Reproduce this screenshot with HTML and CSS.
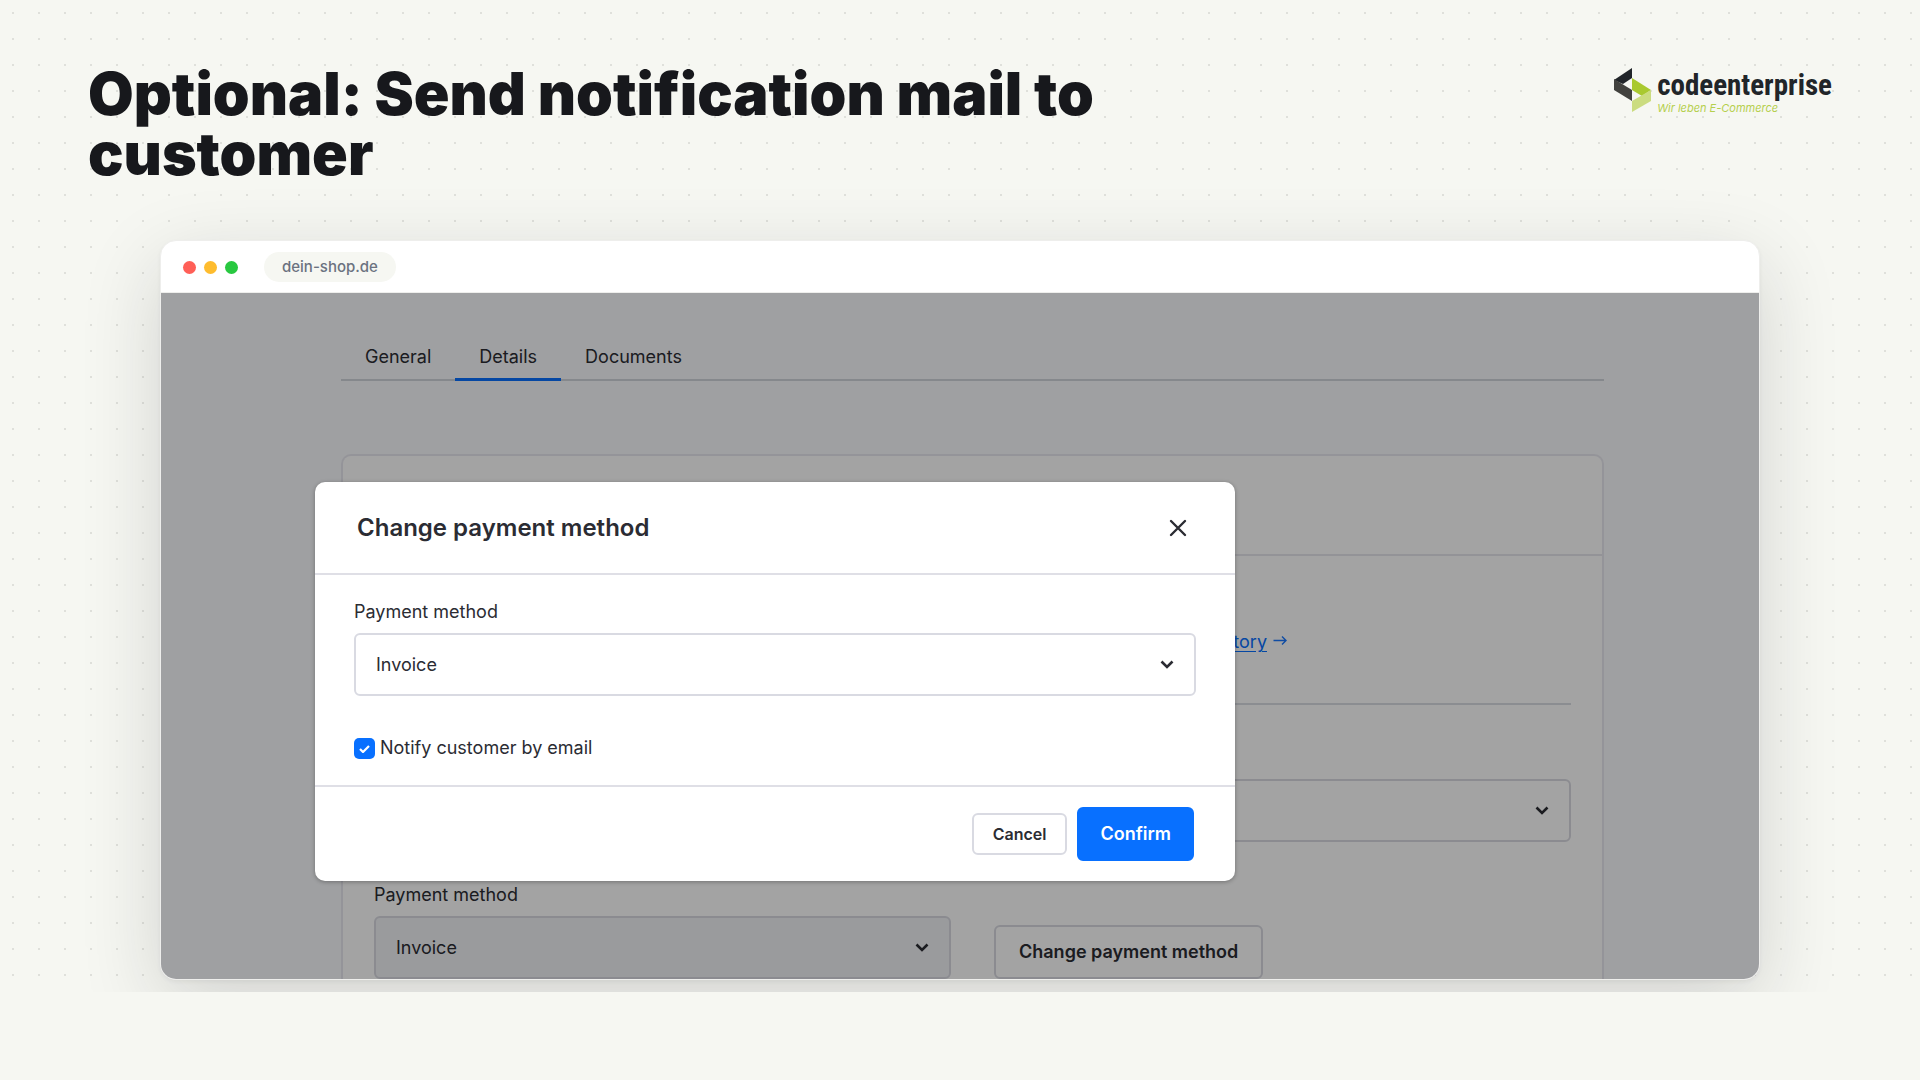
FILE: index.html
```html
<!DOCTYPE html>
<html lang="en">

<head>
    <meta charset="UTF-8">
    <meta name="viewport" content="width=device-width, initial-scale=1.0">
    <title>Optional: Send notification mail to customer</title>
    <link rel="stylesheet" href="styles.css">
</head>

<body>
    <section class="slide">
        <header class="slide-header">
            <h1 class="title">Optional: Send notification mail to customer</h1>

            <div class="logo">
                <svg class="logo-mark" width="38" height="46" viewBox="0 0 38 46">
                    <path d="M18 0 L0 12 L9 16 L18 10 Z" fill="#212529" />
                    <path d="M0 11 L18 22 V33 L0 22 Z" fill="#42423e" />
                    <path d="M18 10 L37 22 L28 28 L18 22 Z" fill="#a9c92f" />
                    <path d="M37 22 V33 L18 44 V33 Z" fill="#cbdc80" />
                </svg>
                <div class="logo-text">
                    <span class="logo-name">codeenterprise</span>
                    <span class="logo-claim">Wir leben E-Commerce</span>
                </div>
            </div>
        </header>

        <div class="browser">
            <div class="browser-bar">
                <span class="dot dot-red"></span>
                <span class="dot dot-yellow"></span>
                <span class="dot dot-green"></span>
                <span class="address">dein-shop.de</span>
            </div>

            <div class="screen">
                <nav class="tabs">
                    <a class="tab" href="#general">General</a>
                    <a class="tab active" href="#details">Details</a>
                    <a class="tab" href="#documents">Documents</a>
                </nav>

                <div class="card">
                    <div class="card-header"></div>
                    <div class="card-body">
                        <div class="history">
                            <a class="history-link" href="#history">history</a>
                            <svg width="14" height="12" viewBox="0 0 14 12" fill="none" stroke="currentColor" stroke-width="1.4">
                                <path d="M0.5 5.5 H13 M9 1.5 L13 5.5 L9 9.5" />
                            </svg>
                        </div>

                        <div class="fields">
                            <div class="select-box column-right">
                                <select class="select" aria-label="Status">
                                    <option></option>
                                </select>
                                <svg class="chevron" width="14" height="9" viewBox="0 0 14 9">
                                    <path d="M1.5 1.5 L7 7 L12.5 1.5" />
                                </svg>
                            </div>

                            <div class="field">
                                <label class="label" for="currentMethod">Payment method</label>
                                <div class="select-box">
                                    <select class="select disabled" id="currentMethod">
                                        <option>Invoice</option>
                                    </select>
                                    <svg class="chevron" width="14" height="9" viewBox="0 0 14 9">
                                        <path d="M1.5 1.5 L7 7 L12.5 1.5" />
                                    </svg>
                                </div>
                            </div>
                            <button type="button" class="button change-button">Change payment method</button>
                        </div>
                    </div>
                </div>

                <div class="overlay">
                    <div class="modal" role="dialog" aria-labelledby="modalTitle">
                        <div class="modal-header">
                            <h2 class="modal-title" id="modalTitle">Change payment method</h2>
                            <button type="button" class="close" aria-label="Close">
                                <svg width="18" height="18" viewBox="0 0 18 18" fill="none" stroke="#2b2c33" stroke-width="2.4" stroke-linecap="round">
                                    <path d="M2 2 L16 16 M16 2 L2 16" />
                                </svg>
                            </button>
                        </div>

                        <div class="modal-body">
                            <label class="label" for="newMethod">Payment method</label>
                            <div class="select-box">
                                <select class="select" id="newMethod">
                                    <option>Invoice</option>
                                </select>
                                <svg class="chevron" width="14" height="9" viewBox="0 0 14 9">
                                    <path d="M1.5 1.5 L7 7 L12.5 1.5" />
                                </svg>
                            </div>

                            <div class="notify">
                                <span class="check-box">
                                    <input class="checkbox" type="checkbox" id="notify" checked>
                                    <svg class="tick" width="11" height="8" viewBox="0 0 11 8">
                                        <path d="M1 4 L4 7 L10 1" />
                                    </svg>
                                </span>
                                <label for="notify">Notify customer by email</label>
                            </div>
                        </div>

                        <div class="modal-footer">
                            <button type="button" class="button cancel-button">Cancel</button>
                            <button type="button" class="button confirm-button">Confirm</button>
                        </div>
                    </div>
                </div>
            </div>
        </div>
    </section>
</body>

</html>
```
FILE: styles.css
```css
* {
    box-sizing: border-box;
}

body {
    margin: 0;
    font-family: Inter, sans-serif;
    background-color: #f6f7f2;
    color: #17181c;
}

.slide {
    padding: 64px 88px 12px;
    overflow: hidden;
    background-image: radial-gradient(circle, #dfe0db 1px, transparent 1px);
    background-size: 26px 26px;
}

.slide-header {
    display: flex;
    justify-content: space-between;
    align-items: flex-start;
}

.title {
    max-width: 1100px;
    margin: 0;
    font-size: 59px;
    font-weight: 900;
    line-height: 60px;
}

/* logo */
.logo {
    display: flex;
    gap: 5px;
    padding-top: 4px;
}

.logo-text {
    display: flex;
    flex-direction: column;
}

.logo-name {
    font-family: "Roboto Condensed", "Liberation Sans Narrow", Roboto, sans-serif;
    font-size: 29px;
    font-weight: 700;
    line-height: 34px;
    color: #212529;
}

.logo-claim {
    font-size: 11px;
    font-style: italic;
    line-height: 12px;
    color: #b5cf4d;
}

/* browser window */
.browser {
    max-width: 1600px;
    margin: 56px auto 0;
    border: 1px solid #eeeeec;
    border-radius: 16px;
    overflow: hidden;
    background-color: #ffffff;
    box-shadow: 0 24px 80px rgba(23, 24, 28, 0.16), 0 2px 4px rgba(23, 24, 28, 0.05);
}

.browser-bar {
    display: flex;
    align-items: center;
    gap: 8px;
    padding: 11px 22px 10px;
    border-bottom: 1px solid #eeeeec;
}

.dot {
    width: 13px;
    height: 13px;
    border-radius: 50%;
}

.dot-red {
    background-color: #ff5f57;
}

.dot-yellow {
    background-color: #febc2e;
}

.dot-green {
    background-color: #28c840;
}

.address {
    margin-left: 18px;
    padding: 0 18px;
    border-radius: 15px;
    background-color: #f6f7f2;
    color: #6b7280;
    font-size: 15px;
    font-weight: 500;
    line-height: 30px;
}

/* shop administration */
.screen {
    position: relative;
    padding: 40px 155px 0 180px;
    background-color: #f9fafd;
    color: #2b2c33;
    font-size: 18px;
    line-height: 24px;
}

.tabs {
    display: flex;
    border-bottom: 2px solid #d1d5db;
}

.tab {
    margin-bottom: -2px;
    padding: 12px 24px 9px;
    border-bottom: 3px solid transparent;
    color: inherit;
    text-decoration: none;
}

.tab.active {
    border-bottom-color: #0870ff;
}

.card {
    margin-top: 73px;
    border: 2px solid #e8e8f0;
    border-bottom: 0;
    border-radius: 10px 10px 0 0;
    background-color: #ffffff;
}

.card-header {
    height: 100px;
    border-bottom: 2px solid #e6e6ec;
}

.card-body {
    padding: 0 31px;
}

.history {
    display: flex;
    justify-content: flex-end;
    gap: 6px;
    padding: 74px 284px 49px 0;
    border-bottom: 2px solid #d9dde3;
    color: #1a78ff;
}

.history-link {
    color: #0870ff;
    text-underline-offset: 3px;
}

.history svg {
    margin-top: 5px;
}

.fields {
    display: grid;
    grid-template-columns: 1fr 1fr;
    column-gap: 43px;
    row-gap: 41px;
    align-items: end;
    justify-items: start;
    padding-top: 74px;
}

.column-right {
    grid-column: 2;
}

.field {
    width: 100%;
}

.label {
    display: block;
    margin-bottom: 9px;
}

.select-box {
    position: relative;
    width: 100%;
}

.select {
    display: block;
    width: 100%;
    height: 63px;
    padding: 0 20px;
    border: 2px solid #d9dae2;
    border-radius: 6px;
    appearance: none;
    background-color: #ffffff;
    color: inherit;
    font: inherit;
}

.select.disabled {
    background-color: #f1f3f6;
}

.chevron {
    position: absolute;
    top: 27px;
    right: 22px;
    fill: none;
    stroke: #2b2c33;
    stroke-width: 2.6;
    pointer-events: none;
}

.button {
    border: 2px solid #d9dae2;
    border-radius: 6px;
    background-color: #ffffff;
    color: #2b2c33;
    font-family: inherit;
    font-size: 18px;
    font-weight: 600;
    line-height: 24px;
    cursor: pointer;
}

.change-button {
    padding: 13px 23px;
}

/* dialog */
.overlay {
    position: absolute;
    inset: 0;
    padding: 189px 154px 0;
    background-color: rgba(0, 0, 0, 0.36);
}

.modal {
    max-width: 920px;
    border-radius: 10px;
    background-color: #ffffff;
    box-shadow: 0 1px 4px rgba(0, 0, 0, 0.3);
}

.modal-header {
    display: flex;
    justify-content: space-between;
    align-items: center;
    padding: 30px 48px 29px 42px;
    border-bottom: 2px solid #dfdfe6;
}

.modal-title {
    margin: 0;
    font-size: 24px;
    font-weight: 600;
    line-height: 32px;
}

.close {
    display: flex;
    padding: 0;
    border: 0;
    background: none;
    cursor: pointer;
}

.modal-body {
    padding: 25px 39px;
    border-bottom: 2px solid #dfdfe6;
}

.notify {
    display: flex;
    align-items: center;
    gap: 5px;
    margin-top: 40px;
}

.check-box {
    position: relative;
    display: flex;
}

.checkbox {
    width: 21px;
    height: 21px;
    margin: 0;
    border-radius: 5px;
    appearance: none;
    background-color: #0870ff;
}

.tick {
    position: absolute;
    top: 7px;
    left: 5px;
    fill: none;
    stroke: #ffffff;
    stroke-width: 2.2;
    pointer-events: none;
}

.modal-footer {
    display: flex;
    justify-content: flex-end;
    align-items: center;
    gap: 10px;
    padding: 20px 41px;
}

.cancel-button {
    padding: 7px 19px;
    font-size: 16px;
}

.confirm-button {
    padding: 13px 21px;
    border-color: #0870ff;
    background-color: #0870ff;
    color: #ffffff;
}
```
